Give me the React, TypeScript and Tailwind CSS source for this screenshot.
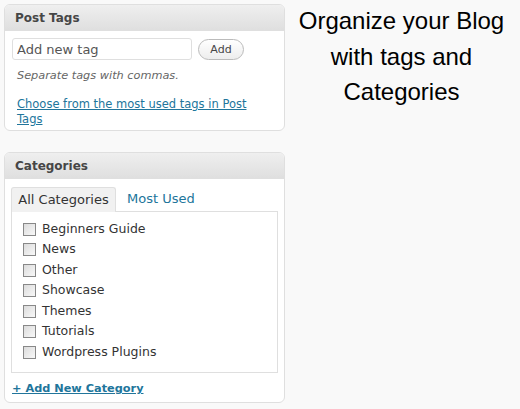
import { useState } from "react";

const categories = [
  "Beginners Guide",
  "News",
  "Other",
  "Showcase",
  "Themes",
  "Tutorials",
  "Wordpress Plugins",
];

function PanelHeader({ title }: { title: string }) {
  return (
    <div className="h-[26px] rounded-t-[5px] border-b border-[#dfdfdf] bg-gradient-to-b from-[#efefef] to-[#dfdfdf] pl-[10px] text-[12px] font-bold leading-[26px] text-[#464646]">
      {title}
    </div>
  );
}

export default function App() {
  const [tab, setTab] = useState<"all" | "used">("all");
  const [checked, setChecked] = useState<string[]>([]);

  const toggle = (c: string) =>
    setChecked((prev) => (prev.includes(c) ? prev.filter((x) => x !== c) : [...prev, c]));

  return (
    <div className="flex h-[409px] w-[520px] bg-[#f9f9f9] font-['DejaVu_Sans',sans-serif] text-[#333]">
      {/* Left column: meta boxes */}
      <div className="flex w-[285px] shrink-0 flex-col gap-[21px] pl-[4px] pt-[4px]">
        {/* Post Tags */}
        <div className="h-[127px] w-[281px] rounded-[6px] border border-[#dfdfdf] bg-white">
          <PanelHeader title="Post Tags" />
          <div className="px-[7px] pt-[7px]">
            <div className="flex items-center gap-[6px]">
              <input
                type="text"
                placeholder="Add new tag"
                className="h-[22px] w-[180px] rounded-[3px] border border-[#dfdfdf] bg-white px-[4px] text-[13px] text-[#333] placeholder:text-[#555] focus:outline-none"
              />
              <button className="h-[21px] w-[46px] rounded-full border border-[#bbb] bg-gradient-to-b from-white to-[#ededed] text-[11px] leading-[19px] text-[#464646]">
                Add
              </button>
            </div>
            <p className="mt-[8px] pl-[5px] text-[11.3px] italic text-[#666]">Separate tags with commas.</p>
            <a
              href="#"
              className="mt-[12px] block w-[245px] pl-[5px] text-[11.5px] leading-[15px] text-[#21759b] underline"
            >
              Choose from the most used tags in Post Tags
            </a>
          </div>
        </div>

        {/* Categories */}
        <div className="h-[251px] w-[281px] rounded-[6px] border border-[#dfdfdf] bg-white">
          <PanelHeader title="Categories" />
          <div className="px-[6px] pt-[8px]">
            <div className="flex items-end">
              <button
                onClick={() => setTab("all")}
                className={
                  tab === "all"
                    ? "relative -mb-px h-[25px] w-[105px] rounded-t-[3px] border border-b-0 border-[#dfdfdf] bg-[#f1f1f1] text-[13px] text-[#333]"
                    : "h-[24px] w-[105px] text-[13px] text-[#21759b]"
                }
              >
                All Categories
              </button>
              <button
                onClick={() => setTab("used")}
                className={
                  tab === "used"
                    ? "relative -mb-px h-[25px] px-[11px] rounded-t-[3px] border border-b-0 border-[#dfdfdf] bg-[#f1f1f1] text-[13px] text-[#333]"
                    : "h-[24px] px-[11px] text-[13px] text-[#21759b]"
                }
              >
                Most Used
              </button>
            </div>
            <div className="h-[162px] w-[267px] border border-[#dfdfdf] bg-white pl-[11px] pt-[7px]">
              {categories.map((c) => (
                <label key={c} className="flex h-[20.5px] cursor-pointer items-center gap-[6px] text-[12.5px]">
                  <span
                    onClick={() => toggle(c)}
                    className="flex h-[13px] w-[13px] items-center justify-center border border-[#888] bg-gradient-to-br from-[#dcdcdc] to-[#f8f8f8]"
                  >
                    {checked.includes(c) && <span className="text-[10px] leading-none text-[#333]">✓</span>}
                  </span>
                  <span className="text-[#333]">{c}</span>
                </label>
              ))}
            </div>
            <a
              href="#"
              className="mt-[8px] block pl-[1px] text-[11.3px] font-bold text-[#21759b] underline"
            >
              + Add New Category
            </a>
          </div>
        </div>
      </div>

      {/* Right column: caption */}
      <div className="flex-1 pt-[3px] pr-[2px] text-center font-['Liberation_Sans',Arial,sans-serif] text-[24px] leading-[35.5px] text-black">
        Organize your Blog
        <br />
        with tags and
        <br />
        Categories
      </div>
    </div>
  );
}
